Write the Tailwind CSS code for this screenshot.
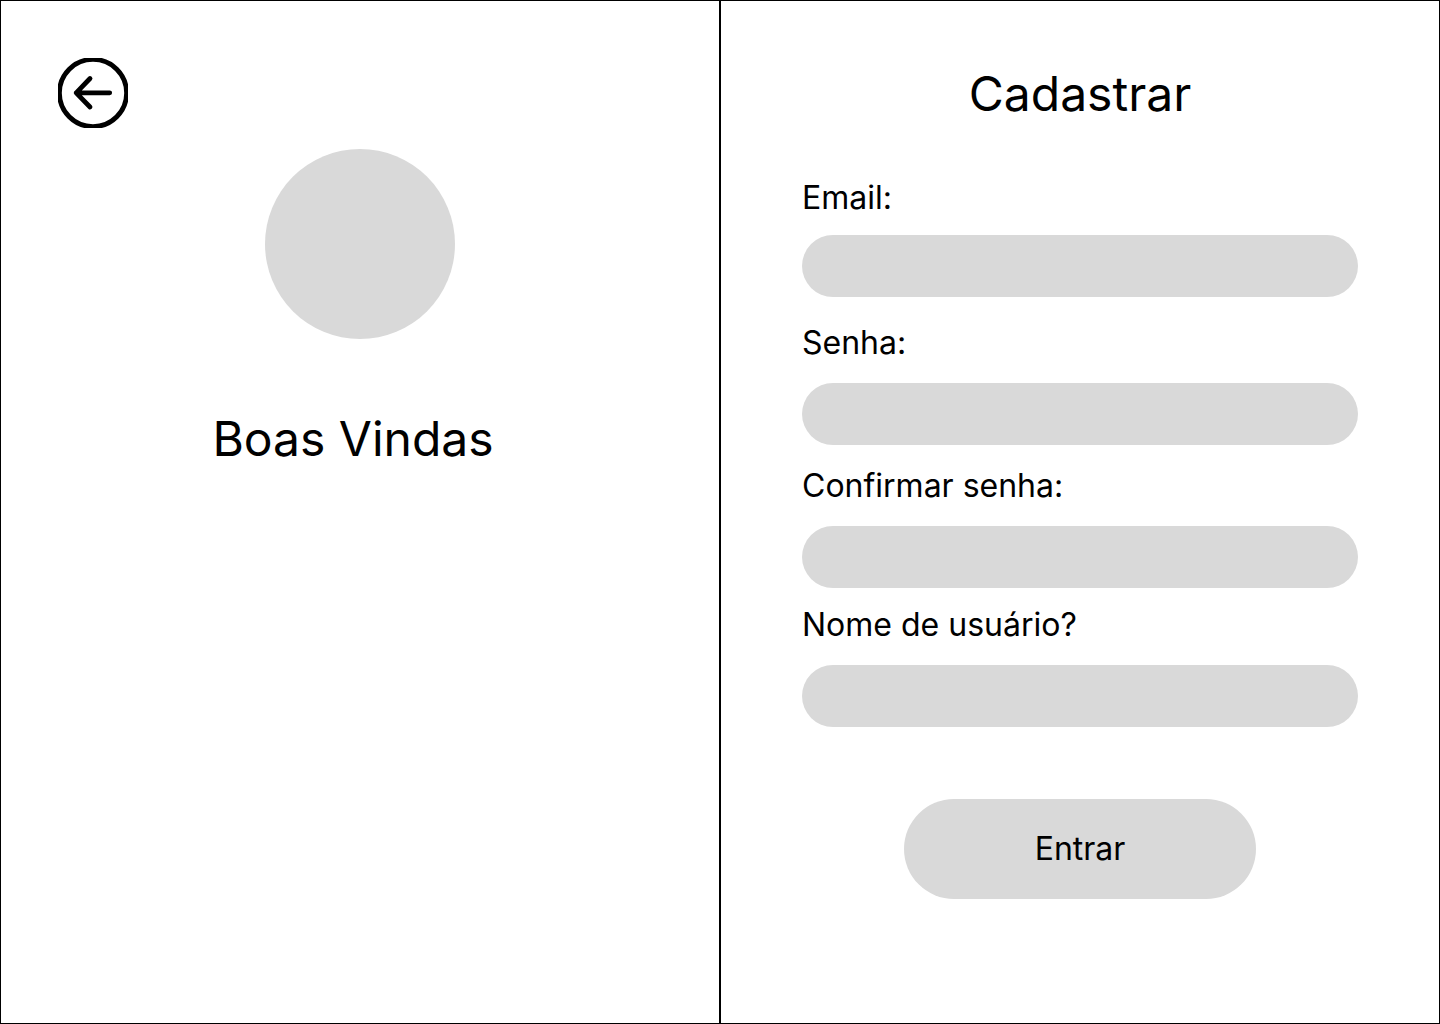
<!DOCTYPE html>
<html lang="pt-BR">
<head>
<meta charset="utf-8">
<meta name="viewport" content="width=device-width, initial-scale=1">
<title>Cadastrar</title>
<script src="https://cdn.jsdelivr.net/npm/@tailwindcss/browser@4"></script>
</head>
<body class="bg-white font-['Inter',sans-serif] text-black">
<main class="grid min-h-screen grid-cols-2">
  <section class="flex flex-col border border-black p-[57px]">
    <a href="#" aria-label="Voltar" class="block size-[70px] self-start">
      <svg viewBox="0 0 70 70" class="size-full" fill="none" stroke="#000" stroke-width="4.8" stroke-linecap="round" stroke-linejoin="round">
        <circle cx="35" cy="35" r="33.6"/>
        <path d="M51.7 34.8H18.2M32 20.5L18.2 34.8L32 49"/>
      </svg>
    </a>
    <div class="mt-[21px] size-[190px] self-center rounded-full bg-[#d9d9d9]"></div>
    <h1 class="mt-[71px] pr-3.5 text-center text-5xl leading-[58px]">Boas Vindas</h1>
  </section>
  <section class="border border-black px-20 pt-16">
    <h2 class="text-center text-5xl leading-[58px]">Cadastrar</h2>
    <form class="mx-px mt-[55px] flex flex-col">
      <label for="email" class="self-start text-[32px] leading-10">Email:</label>
      <input id="email" type="email" class="mt-[17px] h-[62px] rounded-full bg-[#d9d9d9] px-7 text-2xl">
      <label for="senha" class="mt-[26px] self-start text-[32px] leading-10">Senha:</label>
      <input id="senha" type="password" class="mt-5 h-[62px] rounded-full bg-[#d9d9d9] px-7 text-2xl">
      <label for="confirmar" class="mt-[21px] self-start text-[32px] leading-10">Confirmar senha:</label>
      <input id="confirmar" type="password" class="mt-5 h-[62px] rounded-full bg-[#d9d9d9] px-7 text-2xl">
      <label for="usuario" class="mt-[17px] self-start text-[32px] leading-10">Nome de usuário?</label>
      <input id="usuario" type="text" class="mt-5 h-[62px] rounded-full bg-[#d9d9d9] px-7 text-2xl">
      <button type="submit" class="mt-[72px] h-[100px] w-[352px] self-center rounded-full bg-[#d9d9d9] text-[32px] leading-10">Entrar</button>
    </form>
  </section>
</main>
</body>
</html>
